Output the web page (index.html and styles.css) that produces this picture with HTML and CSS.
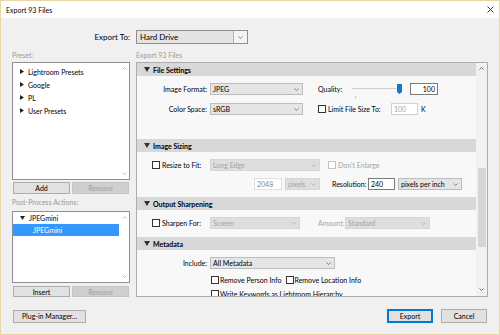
FILE: index.html
```html
<!DOCTYPE html>
<html>
<head>
    <title>Export 93 Files</title>
    <link rel="stylesheet" href="styles.css">
</head>
<body>
<div class="window">
    <div class="titlebar">
        <span>Export 93 Files</span>
        <svg class="close" width="7" height="7" viewBox="0 0 7 7"><path d="M0.5 0.5L6.5 6.5M6.5 0.5L0.5 6.5" stroke="#222" stroke-width="0.9"/></svg>
    </div>

    <div class="dialog">
        <div class="export-to">
            <label>Export To:</label>
            <div class="select-main">
                <span class="sm-text">Hard Drive</span>
                <span class="sm-arrow"><svg width="5" height="3" viewBox="0 0 5 3"><path d="M0.5 0.5L2.5 2.5L4.5 0.5" fill="none" stroke="#666" stroke-width="0.8"/></svg></span>
            </div>
        </div>

        <div class="columns">
            <div class="left">
                <div class="caption">Preset:</div>
                <div class="listbox preset-list">
                    <div class="list-items">
                        <div class="item"><svg class="tri" width="4" height="5" viewBox="0 0 4 5"><path d="M0 0L4 2.5L0 5Z" fill="#222"/></svg>Lightroom Presets</div>
                        <div class="item"><svg class="tri" width="4" height="5" viewBox="0 0 4 5"><path d="M0 0L4 2.5L0 5Z" fill="#222"/></svg>Google</div>
                        <div class="item"><svg class="tri" width="4" height="5" viewBox="0 0 4 5"><path d="M0 0L4 2.5L0 5Z" fill="#222"/></svg>PL</div>
                        <div class="item"><svg class="tri" width="4" height="5" viewBox="0 0 4 5"><path d="M0 0L4 2.5L0 5Z" fill="#222"/></svg>User Presets</div>
                    </div>
                    <div class="list-scroll">
                        <svg width="5" height="3" viewBox="0 0 5 3"><path d="M0.5 2.5L2.5 0.5L4.5 2.5" fill="none" stroke="#aaa" stroke-width="0.8"/></svg>
                        <svg width="5" height="3" viewBox="0 0 5 3"><path d="M0.5 0.5L2.5 2.5L4.5 0.5" fill="none" stroke="#aaa" stroke-width="0.8"/></svg>
                    </div>
                </div>
                <div class="btn-row">
                    <button class="btn">Add</button>
                    <button class="btn disabled">Remove</button>
                </div>

                <div class="caption pp">Post-Process Actions:</div>
                <div class="listbox actions-list">
                    <div class="list-items">
                        <div class="item"><svg class="tri" width="5" height="4" viewBox="0 0 5 4"><path d="M0 0L5 0L2.5 4Z" fill="#222"/></svg>JPEGmini</div>
                        <div class="item selected">JPEGmini</div>
                    </div>
                    <div class="list-scroll">
                        <svg width="5" height="3" viewBox="0 0 5 3"><path d="M0.5 2.5L2.5 0.5L4.5 2.5" fill="none" stroke="#aaa" stroke-width="0.8"/></svg>
                        <svg width="5" height="3" viewBox="0 0 5 3"><path d="M0.5 0.5L2.5 2.5L4.5 0.5" fill="none" stroke="#aaa" stroke-width="0.8"/></svg>
                    </div>
                </div>
                <div class="btn-row small">
                    <button class="btn">Insert</button>
                    <button class="btn disabled">Remove</button>
                </div>
            </div>

            <div class="right">
                <div class="caption">Export 93 Files</div>
                <div class="panel">
                    <div class="scroll-area">
                        <!-- File Settings -->
                        <div class="sec-head"><svg class="tri" width="6" height="5" viewBox="0 0 6 5"><path d="M0 0L6 0L3 5Z" fill="#333"/></svg>File Settings</div>
                        <div class="sec-body file-settings">
                            <div class="row">
                                <span class="lbl">Image Format:</span>
                                <div class="sel w93"><span>JPEG</span><svg width="5" height="3" viewBox="0 0 5 3"><path d="M0.5 0.5L2.5 2.5L4.5 0.5" fill="none" stroke="#666" stroke-width="0.8"/></svg></div>
                                <span class="quality-lbl">Quality:</span>
                                <svg class="slider" width="50" height="12" viewBox="0 0 50 12">
                                    <line x1="0" y1="5.5" x2="48" y2="5.5" stroke="#d0d0d0" stroke-width="1"/>
                                    <line x1="3.5" y1="13" x2="3.5" y2="15" stroke="#999" stroke-width="0.6"/>
                                    <path d="M45 1H50V9L47.5 11L45 9Z" fill="#1a74d2"/>
                                </svg>
                                <span class="inp right w28">100</span>
                            </div>
                            <div class="row">
                                <span class="lbl">Color Space:</span>
                                <div class="sel w93"><span>sRGB</span><svg width="5" height="3" viewBox="0 0 5 3"><path d="M0.5 0.5L2.5 2.5L4.5 0.5" fill="none" stroke="#666" stroke-width="0.8"/></svg></div>
                                <span class="cb limit-cb"></span>
                                <span class="limit-lbl">Limit File Size To:</span>
                                <span class="inp off w27">100</span>
                                <span class="unit">K</span>
                            </div>
                        </div>

                        <!-- Image Sizing -->
                        <div class="sec-head"><svg class="tri" width="6" height="5" viewBox="0 0 6 5"><path d="M0 0L6 0L3 5Z" fill="#333"/></svg>Image Sizing</div>
                        <div class="sec-body image-sizing">
                            <div class="row indent">
                                <span class="cb"></span>
                                <span class="cb-lbl">Resize to Fit:</span>
                                <div class="sel off w110"><span>Long Edge</span><svg width="5" height="3" viewBox="0 0 5 3"><path d="M0.5 0.5L2.5 2.5L4.5 0.5" fill="none" stroke="#aaa" stroke-width="0.8"/></svg></div>
                                <span class="cb off enlarge-cb"></span>
                                <span class="muted">Don't Enlarge</span>
                            </div>
                            <div class="row size-row">
                                <span class="inp w28 dim">2048</span>
                                <div class="sel off w35"><span>pixels</span><svg width="5" height="3" viewBox="0 0 5 3"><path d="M0.5 0.5L2.5 2.5L4.5 0.5" fill="none" stroke="#aaa" stroke-width="0.8"/></svg></div>
                                <span class="res-lbl">Resolution:</span>
                                <span class="inp w27">240</span>
                                <div class="sel w64"><span>pixels per inch</span><svg width="5" height="3" viewBox="0 0 5 3"><path d="M0.5 0.5L2.5 2.5L4.5 0.5" fill="none" stroke="#666" stroke-width="0.8"/></svg></div>
                            </div>
                        </div>

                        <!-- Output Sharpening -->
                        <div class="sec-head"><svg class="tri" width="6" height="5" viewBox="0 0 6 5"><path d="M0 0L6 0L3 5Z" fill="#333"/></svg>Output Sharpening</div>
                        <div class="sec-body sharpening">
                            <div class="row indent">
                                <span class="cb"></span>
                                <span class="cb-lbl">Sharpen For:</span>
                                <div class="sel off w90"><span>Screen</span><svg width="5" height="3" viewBox="0 0 5 3"><path d="M0.5 0.5L2.5 2.5L4.5 0.5" fill="none" stroke="#aaa" stroke-width="0.8"/></svg></div>
                                <span class="muted amount-lbl">Amount:</span>
                                <div class="sel off w85"><span>Standard</span><svg width="5" height="3" viewBox="0 0 5 3"><path d="M0.5 0.5L2.5 2.5L4.5 0.5" fill="none" stroke="#aaa" stroke-width="0.8"/></svg></div>
                            </div>
                        </div>

                        <!-- Metadata -->
                        <div class="sec-head"><svg class="tri" width="6" height="5" viewBox="0 0 6 5"><path d="M0 0L6 0L3 5Z" fill="#333"/></svg>Metadata</div>
                        <div class="sec-body metadata">
                            <div class="row">
                                <span class="lbl">Include:</span>
                                <div class="sel w125"><span>All Metadata</span><svg width="5" height="3" viewBox="0 0 5 3"><path d="M0.5 0.5L2.5 2.5L4.5 0.5" fill="none" stroke="#666" stroke-width="0.8"/></svg></div>
                            </div>
                            <div class="row check-row">
                                <span class="cb"></span><span class="check-txt">Remove Person Info</span>
                                <span class="cb"></span><span class="check-txt">Remove Location Info</span>
                            </div>
                            <div class="row check-row">
                                <span class="cb"></span><span class="check-txt">Write Keywords as Lightroom Hierarchy</span>
                            </div>
                        </div>
                    </div>
                    <div class="scrollbar">
                        <svg width="5" height="3" viewBox="0 0 5 3"><path d="M0.5 2.5L2.5 0.5L4.5 2.5" fill="none" stroke="#555" stroke-width="0.9"/></svg>
                        <div class="sb-thumb"></div>
                        <svg class="sb-down" width="5" height="3" viewBox="0 0 5 3"><path d="M0.5 0.5L2.5 2.5L4.5 0.5" fill="none" stroke="#555" stroke-width="0.9"/></svg>
                    </div>
                </div>
            </div>
        </div>

        <div class="footer">
            <button class="btn plugin">Plug-in Manager...</button>
            <div class="footer-right">
                <button class="btn primary">Export</button>
                <button class="btn">Cancel</button>
            </div>
        </div>
    </div>
</div>
</body>
</html>
```

FILE: styles.css
```css
* {
    box-sizing: border-box;
}

body {
    margin: 0;
    font-family: Lato, "Liberation Sans", sans-serif;
    font-size: 7px;
    color: #000;
}

.window {
    width: 500px;
    height: 335px;
    border: 1px solid #e8d7a6;
    background: #f0f0f0;
    display: flex;
    flex-direction: column;
}

.titlebar {
    height: 17px;
    background: #fff;
    display: flex;
    align-items: center;
    justify-content: space-between;
    padding: 0 5px 0 5px;
}

.dialog {
    flex: 1;
    padding: 12px 11px 0 11px;
    display: flex;
    flex-direction: column;
}

/* export to */
.export-to {
    display: grid;
    grid-template-columns: 118px 112px;
    column-gap: 6px;
    height: 14px;
    align-items: center;
    font-size: 8px;
}

.export-to label {
    text-align: right;
}

.select-main {
    height: 14px;
    display: flex;
    border: 1px solid #8f8f8f;
}

.sm-text {
    flex: 1;
    background: #e4e4e4;
    border-right: 1px solid #b5b5b5;
    padding-left: 3px;
    line-height: 12px;
}

.sm-arrow {
    width: 13px;
    background: #f4f4f4;
    display: flex;
    align-items: center;
    justify-content: center;
}

/* columns */
.columns {
    margin-top: 6px;
    display: grid;
    grid-template-columns: 118px 352px;
    column-gap: 6px;
}

.caption {
    height: 12px;
    line-height: 10px;
    color: #9a9a9a;
}

.caption.pp {
    margin-top: 3px;
    height: 14px;
}

.listbox {
    background: #fff;
    border: 1px solid #8c9099;
    display: flex;
}

.preset-list {
    height: 118px;
}

.actions-list {
    height: 72px;
}

.list-items {
    flex: 1;
    padding-top: 2px;
}

.actions-list .list-items {
    padding-top: 0;
}

.item {
    height: 13px;
    display: flex;
    align-items: center;
    padding-left: 7px;
}

.actions-list .item {
    height: 12px;
}

.item .tri {
    margin-right: 4px;
}

.item.selected {
    background: #3399ff;
    color: #fff;
    padding-left: 20px;
}

.list-scroll {
    width: 10px;
    display: flex;
    flex-direction: column;
    justify-content: space-between;
    align-items: center;
    padding: 4px 0 4px 0;
}

.btn-row {
    margin-top: 2px;
    height: 12px;
    display: flex;
    gap: 2px;
    padding: 0 1px;
}

.btn-row.small {
    margin-top: 3px;
    height: 11px;
}

.btn {
    flex: 1;
    font-family: inherit;
    font-size: 7px;
    padding: 0;
    background: #e1e1e1;
    border: 1px solid #adadad;
    color: #000;
}

.btn.disabled {
    background: #cfcfcf;
    border-color: #c4c4c4;
    color: #9d9d9d;
}

/* right panel */
.panel {
    height: 235px;
    border: 1px solid #adadad;
    background: #f8f8f8;
    display: flex;
}

.scroll-area {
    flex: 1;
    overflow: hidden;
}

.sec-head {
    height: 13px;
    background: #d8d8d8;
    display: flex;
    align-items: center;
    padding-left: 7px;
    font-weight: bold;
}

.sec-head .tri {
    margin-right: 3px;
}

.sec-body {
    padding-top: 7px;
}

.file-settings {
    height: 63px;
}

.image-sizing {
    height: 45px;
}

.sharpening {
    height: 27px;
}

.row {
    height: 12px;
    display: flex;
    align-items: center;
    white-space: nowrap;
}

.row > * {
    flex-shrink: 0;
}

.file-settings .row + .row {
    margin-top: 8px;
}

.lbl {
    width: 70px;
    text-align: right;
    margin-right: 3px;
}

.sel {
    height: 12px;
    border: 1px solid #bdbdbd;
    background: #e5e5e5;
    display: flex;
    align-items: center;
    justify-content: space-between;
    padding: 0 3px 0 2px;
}

.sel.off {
    background: #dedede;
    border-color: #d6d6d6;
    color: #a3a3a3;
}

.w93 { width: 93px; }
.w110 { width: 110px; }
.w35 { width: 35px; }
.w64 { width: 64px; }
.w90 { width: 90px; }
.w85 { width: 85px; }
.w125 { width: 125px; }
.w28 { width: 28px; }
.w27 { width: 27px; }

.inp {
    height: 12px;
    background: #fff;
    border: 1px solid #7a7a7a;
    padding: 0 2px;
    line-height: 10px;
}

.inp.right {
    text-align: right;
}

.inp.off {
    border-color: #d2d2d2;
    color: #a3a3a3;
}

.inp.dim {
    border-color: #e0e0e0;
    color: #8a8a8a;
}

.quality-lbl {
    margin-left: 15px;
    width: 34px;
}

.slider {
    overflow: visible;
    margin-right: 8px;
}

.cb {
    width: 8px;
    height: 8px;
    border: 1px solid #333;
    background: #fff;
}

.cb.off {
    border-color: #c4c4c4;
}

.limit-cb {
    margin-left: 15px;
}

.limit-lbl {
    margin-left: 2px;
    width: 63px;
}

.unit {
    margin-left: 3px;
}

.indent {
    padding-left: 15px;
}

.cb-lbl {
    margin-left: 2px;
    width: 48px;
}

.enlarge-cb {
    margin-left: 8px;
}

.muted {
    color: #a3a3a3;
    margin-left: 2px;
}

.size-row {
    margin-top: 7px;
    padding-left: 117px;
}

.size-row .sel.off {
    margin-left: 3px;
}

.res-lbl {
    margin-left: 12px;
    width: 36px;
}

.size-row .w64 {
    margin-left: 3px;
}

.amount-lbl {
    margin-left: 18px;
    min-width: 27px;
}

.check-row {
    margin-top: 5px;
    padding-left: 74px;
}

.metadata .check-row + .check-row {
    margin-top: 2px;
}

.check-txt {
    margin-left: 1px;
    margin-right: 4px;
}

/* scrollbar */
.scrollbar {
    width: 11px;
    background: #f2f2f2;
    display: flex;
    flex-direction: column;
    align-items: center;
    padding: 4px 0 5px 0;
}

.sb-thumb {
    margin-top: 98px;
    width: 8px;
    height: 79px;
    background: #d6d6d6;
}

.sb-down {
    margin-top: auto;
}

/* footer */
.footer {
    margin-top: 12px;
    height: 14px;
    display: flex;
    justify-content: space-between;
    align-items: center;
    padding: 0 1px 0 1px;
}

.plugin {
    flex: none;
    width: 73px;
    height: 13px;
}

.footer-right {
    display: flex;
    gap: 8px;
}

.footer-right .btn {
    flex: none;
    width: 46px;
    height: 14px;
}

.btn.primary {
    border: 1px solid #0078d7;
    box-shadow: inset 0 0 0 1px #0078d7;
}
```
